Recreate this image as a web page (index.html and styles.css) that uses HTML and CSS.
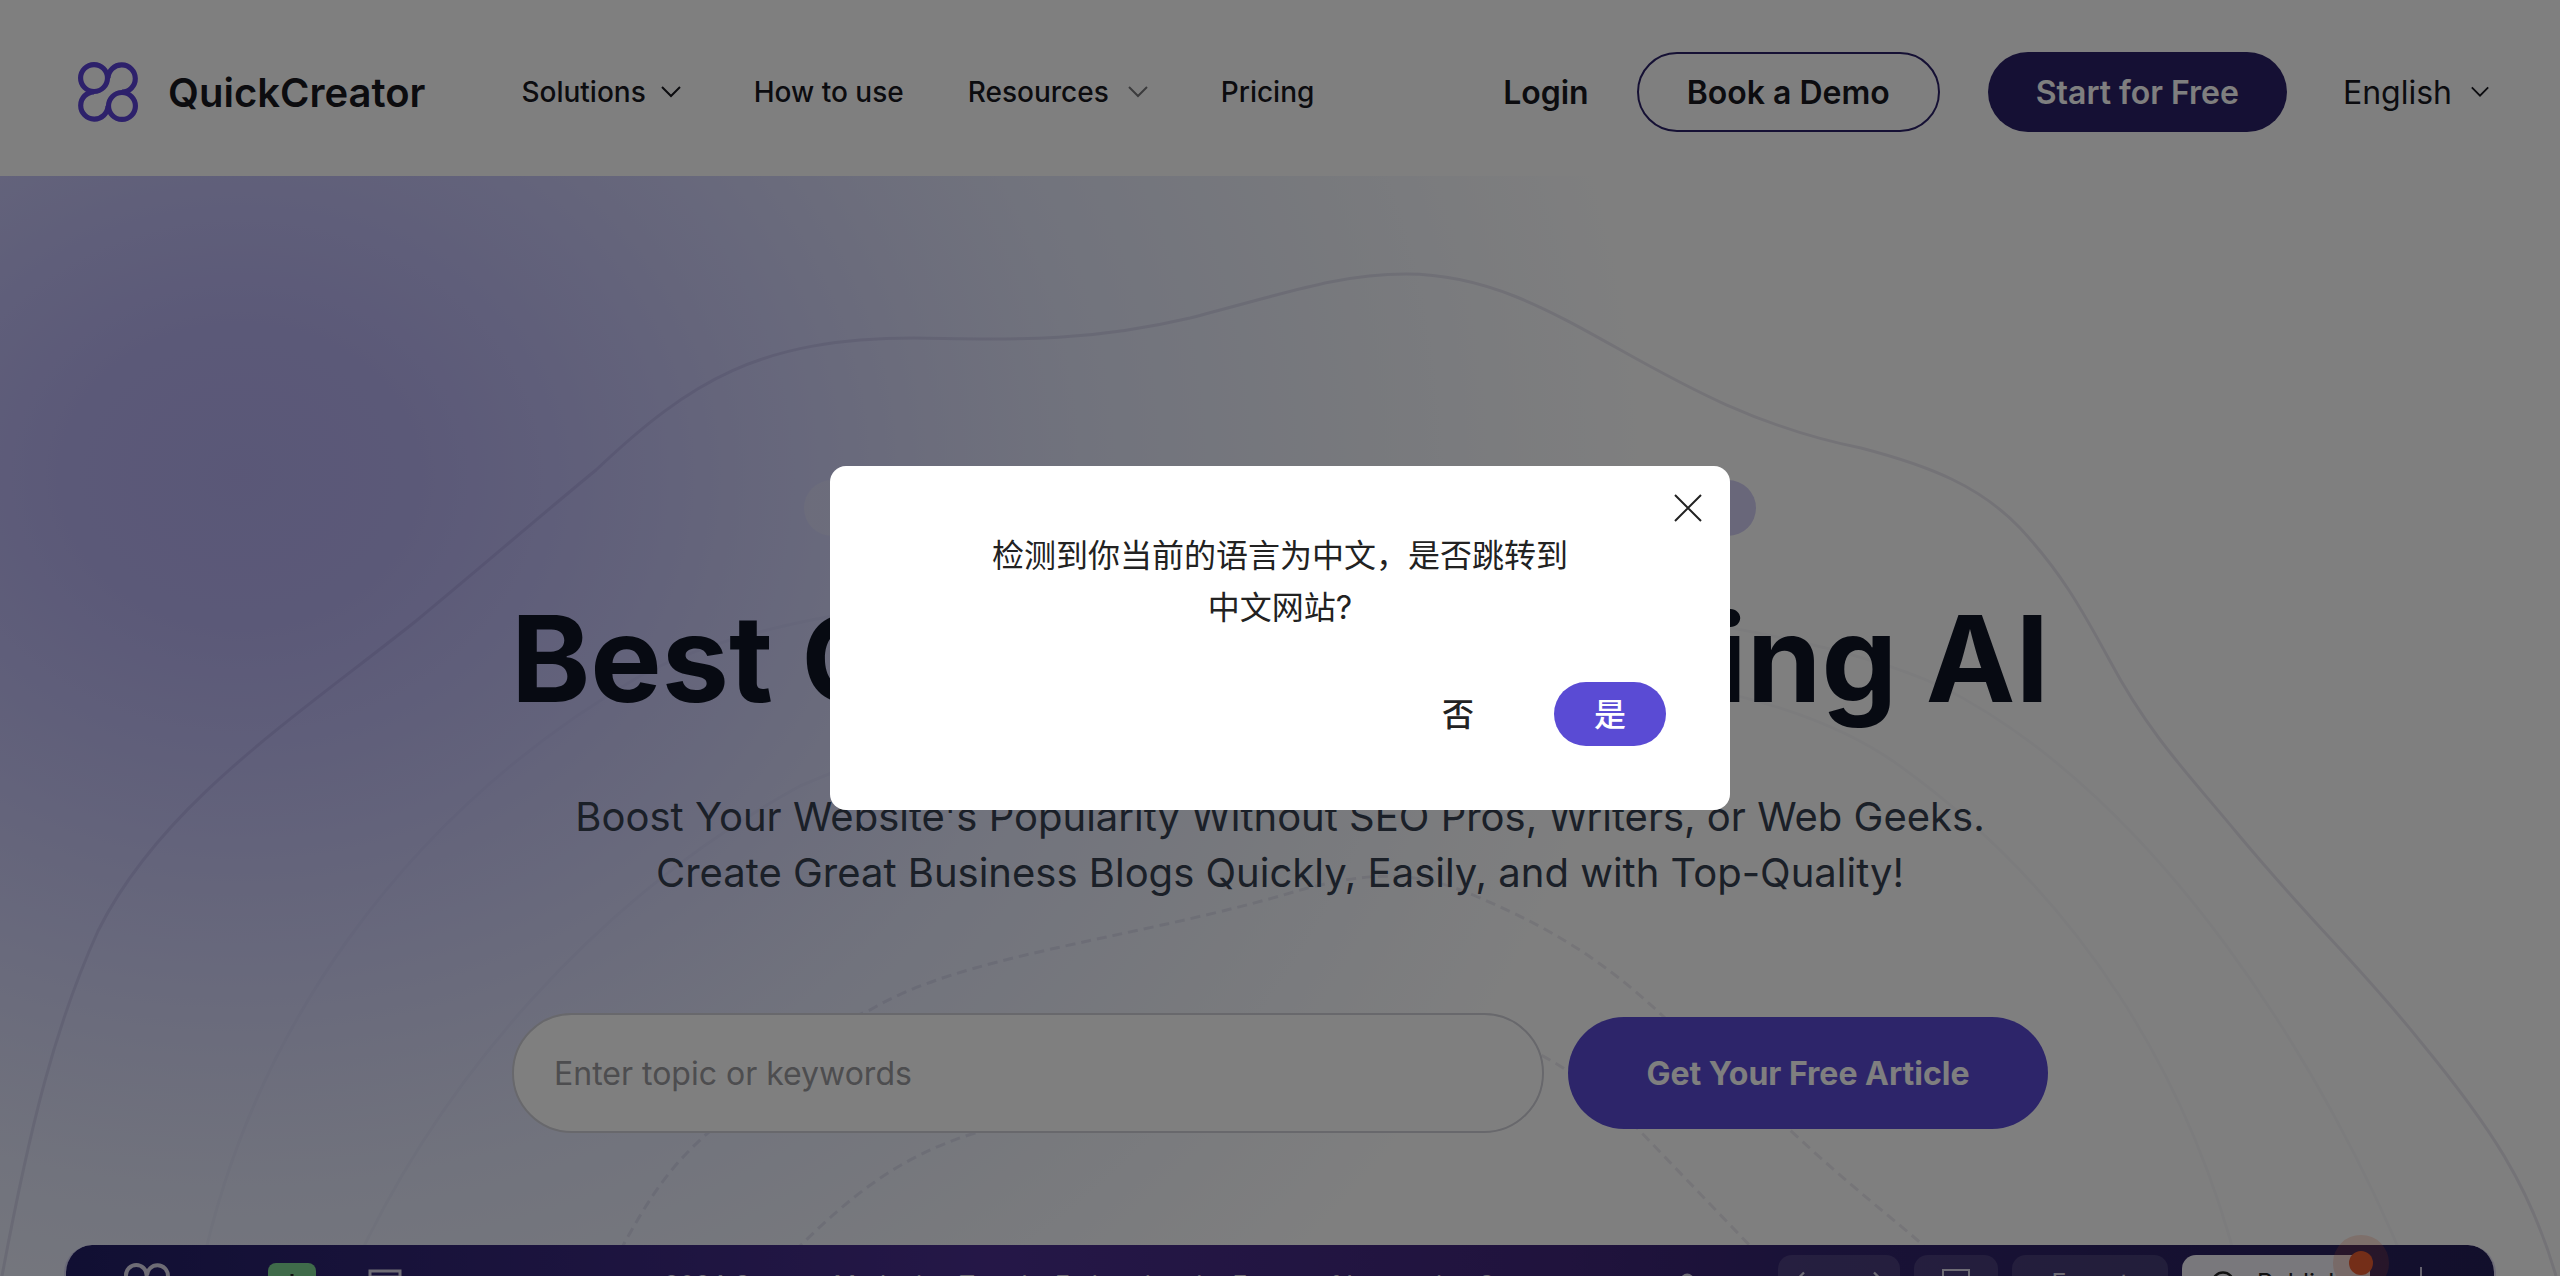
FILE: index.html
```html
<!DOCTYPE html>
<html lang="en">
<head>
    <meta charset="UTF-8">
    <meta name="viewport" content="width=device-width, initial-scale=1.0">
    <title>QuickCreator - Best Content Marketing AI</title>
    <link rel="stylesheet" href="styles.css">
</head>
<body>

    <!-- Header -->
    <header class="header">
        <a href="#" class="brand">
            <svg class="brand-logo" viewBox="0 0 58 58" fill="none" stroke="currentColor" stroke-width="5">
                <circle cx="15.500" cy="15.500" r="13"/>
                <circle cx="42.500" cy="42.500" r="13"/>
                <path d="M29 15.500A13.200 13.200 0 1 1 42.500 29.200M15.500 28.800A13.200 13.200 0 1 0 29 42.500"/>
            </svg>
            <span>QuickCreator</span>
        </a>

        <nav class="nav">
            <a href="#" class="nav-link">Solutions
                <svg class="chevron" viewBox="0 0 22 14"><path d="M2 2l9 9 9-9"/></svg>
            </a>
            <a href="#" class="nav-link">How to use</a>
            <a href="#" class="nav-link nav-link-wide">Resources
                <svg class="chevron chevron-light" viewBox="0 0 22 14"><path d="M2 2l9 9 9-9"/></svg>
            </a>
            <a href="#" class="nav-link">Pricing</a>
        </nav>

        <div class="actions">
            <a href="#" class="login">Login</a>
            <button class="btn btn-outline">Book a Demo</button>
            <button class="btn btn-dark">Start for Free</button>
            <button class="language">English
                <svg class="chevron chevron-small" viewBox="0 0 22 14"><path d="M2 2l9 9 9-9"/></svg>
            </button>
        </div>
    </header>

    <!-- Hero -->
    <main class="hero">
        <svg class="hero-lines" viewBox="0 0 2560 1100" preserveAspectRatio="none" fill="none">
            <path d="M2 1100C30 950 55 850 98 755C160 630 290 545 416 445C480 392 540 340 596 294C690 205 760 162 914 162C1000 163 1080 168 1190 142C1290 116 1340 98 1406 98C1560 98 1650 230 1861 272C1930 290 1980 310 2020 352C2060 395 2080 430 2110 485C2150 560 2190 600 2237 657C2310 745 2360 790 2420 865C2490 950 2530 1010 2556 1100"/>
            <path class="faint" d="M200 1100C250 860 400 640 640 500C900 360 1700 400 1940 510C2160 620 2330 900 2410 1100"/>
            <path class="faint" d="M350 1100C440 900 600 720 800 610C1100 480 1680 430 1900 590C2080 720 2190 900 2240 1100"/>
            <path class="dashed" d="M620 1075C650 1020 670 990 710 955C770 890 810 860 870 834C960 780 1120 765 1280 720C1370 692 1420 695 1480 722C1570 760 1620 800 1664 841C1710 885 1750 915 1790 954C1850 1010 1890 1040 1930 1075"/>
            <path class="dashed" d="M795 1075C850 1020 900 980 975 957C1150 880 1400 830 1541 879C1580 900 1610 925 1639 954L1755 1075"/>
        </svg>

        <div class="badge"></div>
        <h1>Best Content Marketing AI</h1>
        <p class="subtitle">Boost Your Website's Popularity Without SEO Pros, Writers, or Web Geeks.<br>Create Great Business Blogs Quickly, Easily, and with Top-Quality!</p>

        <form class="topic-form">
            <input type="text" class="topic-input" aria-label="Topic" placeholder="Enter topic or keywords">
            <button type="button" class="topic-btn">Get Your Free Article</button>
        </form>

        <!-- Editor preview -->
        <section class="editor">
            <svg class="editor-logo" viewBox="0 0 58 58" fill="none" stroke="currentColor" stroke-width="5">
                <circle cx="15.500" cy="15.500" r="13"/>
                <circle cx="42.500" cy="42.500" r="13"/>
                <path d="M29 15.500A13.200 13.200 0 1 1 42.500 29.200M15.500 28.800A13.200 13.200 0 1 0 29 42.500"/>
            </svg>
            <span class="editor-add">
                <svg viewBox="0 0 28 28" fill="none" stroke="currentColor" stroke-width="3"><path d="M14 1v26M1 14h26"/></svg>
            </span>
            <svg class="editor-layout" viewBox="0 0 34 34" fill="none" stroke="currentColor" stroke-width="3"><path d="M2 2h30v30H2zM2 8h30"/></svg>
            <span class="editor-title">2024 Content Marketing Trends: Embracing the Future of Interactive Content</span>
            <svg class="editor-search" viewBox="0 0 20 20" fill="none" stroke="currentColor" stroke-width="3"><circle cx="8" cy="8" r="6"/><path d="M13 13l6 6"/></svg>
            <div class="editor-tools">
                <span class="tool tool-history">
                    <svg viewBox="0 0 24 24"><path d="M12 3l-9 9 9 9"/></svg>
                    <svg viewBox="0 0 24 24"><path d="M12 3l9 9-9 9"/></svg>
                </span>
                <span class="tool tool-device"><svg viewBox="0 0 28 28"><path d="M1 1h26v19H1zM8 26h12"/></svg></span>
                <span class="tool tool-export">Export</span>
                <span class="tool tool-publish">
                    <svg viewBox="0 0 24 24"><circle cx="12" cy="12" r="9"/></svg>
                    Publish
                    <i class="notice"></i>
                </span>
                <span class="editor-divider"></span>
            </div>
        </section>
    </main>

    <!-- Language popup -->
    <div class="overlay">
        <div class="popup" role="dialog" aria-modal="true" lang="zh-CN">
            <button class="popup-close" aria-label="关闭">
                <svg viewBox="0 0 28 28"><path d="M1 1l26 26M27 1L1 27"/></svg>
            </button>
            <p class="popup-text">检测到你当前的语言为中文，是否跳转到中文网站?</p>
            <div class="popup-actions">
                <button class="popup-btn">否</button>
                <button class="popup-btn popup-btn-primary">是</button>
            </div>
        </div>
    </div>

</body>
</html>
```
FILE: styles.css
```css
/* Basic Reset */
* {
    margin: 0;
    padding: 0;
    box-sizing: border-box;
}

/* The page does not scroll while the popup is open */
body {
    height: 100vh;
    overflow: hidden;
    background: #fff;
    color: #18181f;
    font-family: 'Inter', sans-serif;
}

a {
    color: inherit;
    text-decoration: none;
}

button {
    border: none;
    background: none;
    color: inherit;
    font-family: inherit;
    cursor: pointer;
}

/* Header */
.header {
    display: flex;
    align-items: center;
    height: 176px;
    padding: 8px 70px 0 78px;
}

.brand {
    display: flex;
    align-items: center;
    gap: 30px;
    font-size: 40px;
    font-weight: 600;
}

.brand-logo {
    width: 60px;
    height: 60px;
    color: #5b42d6;
}

.nav {
    display: flex;
    gap: 64px;
    margin-left: 96px;
    font-size: 28px;
    font-weight: 500;
}

.nav-link {
    display: flex;
    align-items: center;
    gap: 14px;
}

.nav-link-wide {
    gap: 18px;
}

.chevron {
    width: 22px;
    height: 14px;
    margin-right: 8px;
    fill: none;
    stroke: currentColor;
    stroke-width: 2;
}

.chevron-light {
    color: #77777a;
}

.chevron-small {
    width: 20px;
    margin-right: 0;
}

.actions {
    display: flex;
    align-items: center;
    gap: 48px;
    margin-left: auto;
    font-size: 32px;
    font-weight: 600;
}

.btn {
    height: 80px;
    padding: 0 48px;
    border-radius: 40px;
    font-size: 32px;
    font-weight: 600;
}

.btn-outline {
    border: 2px solid #2b2168;
}

.btn-dark {
    background: #2b2168;
    color: #fff;
}

.language {
    display: flex;
    align-items: center;
    gap: 18px;
    margin-left: 8px;
    font-size: 32px;
}

/* Hero */
.hero {
    position: relative;
    display: flex;
    flex-direction: column;
    align-items: center;
    padding: 304px 64px 0;
    background:
        radial-gradient(ellipse 1420px 1200px at 240px 300px, rgba(90, 78, 220, 0.45) 0%, rgba(90, 80, 222, 0.44) 12%, rgba(90, 86, 228, 0.38) 24%, rgba(92, 98, 232, 0.28) 42%, rgba(90, 112, 225, 0.17) 60%, rgba(95, 125, 210, 0.09) 80%, rgba(110, 145, 190, 0) 100%);
}

.hero-lines {
    position: absolute;
    inset: 0;
    width: 100%;
    height: 1100px;
    stroke: rgba(70, 60, 120, 0.12);
    stroke-width: 3;
}

.hero-lines .faint {
    stroke: rgba(70, 60, 120, 0.03);
}

.hero-lines .dashed {
    stroke: rgba(70, 60, 120, 0.1);
    stroke-dasharray: 10 6;
}

.badge {
    width: 952px;
    height: 56px;
    border-radius: 28px;
    background: linear-gradient(90deg, rgba(235, 235, 245, 0.3), #d2cef4);
}

h1 {
    position: relative;
    margin-top: 48px;
    color: #0e1424;
    font-size: 120px;
    line-height: 150px;
    font-weight: 700;
}

.subtitle {
    position: relative;
    margin-top: 55px;
    color: #374151;
    font-size: 40px;
    line-height: 56px;
    text-align: center;
}

.topic-form {
    position: relative;
    display: flex;
    align-items: center;
    gap: 24px;
    width: 100%;
    max-width: 1536px;
    margin-top: 112px;
}

.topic-input {
    flex: 1;
    height: 120px;
    padding: 0 40px;
    border: 2px solid #d0d0d8;
    border-radius: 60px;
    background: #fff;
    font-family: inherit;
    font-size: 32px;
}

.topic-input::placeholder {
    color: #9a9a9e;
}

.topic-btn {
    width: 480px;
    height: 112px;
    border-radius: 56px;
    background: #5a4bd4;
    color: #fff;
    font-size: 32px;
    font-weight: 700;
}

/* Editor preview */
.editor {
    position: relative;
    display: flex;
    align-items: flex-start;
    width: 100%;
    height: 400px;
    margin-top: 112px;
    padding: 10px 72px 0 58px;
    border-radius: 28px 28px 0 0;
    background: linear-gradient(90deg, #221f66, #4a2f8f 38%, #40267a 62%, #33246e 72%, #251f58);
    background-clip: padding-box;
    border: solid rgba(160, 150, 220, 0.3);
    border-width: 0 2px;
    color: #dcd8ea;
    font-size: 25px;
}

.editor-logo {
    width: 46px;
    height: 46px;
    margin-top: 8px;
}

.editor-add {
    display: flex;
    align-items: center;
    justify-content: center;
    width: 48px;
    height: 48px;
    margin: 8px 52px 0 98px;
    border-radius: 8px;
    background: #7fd694;
    color: #222;
}

.editor-add svg {
    width: 28px;
}

.editor-layout {
    width: 34px;
    height: 34px;
    margin-top: 14px;
}

.editor-title {
    margin: 14px 0 0 262px;
    line-height: 32px;
    white-space: nowrap;
}

.editor-search {
    width: 18px;
    margin: 18px 0 0 auto;
}

.editor-tools {
    display: flex;
    gap: 14px;
    margin-left: 80px;
}

.tool {
    position: relative;
    display: flex;
    align-items: center;
    justify-content: center;
    gap: 20px;
    height: 56px;
    border-radius: 14px;
    background: rgba(255, 255, 255, 0.12);
}

.tool svg {
    width: 28px;
    height: 28px;
    fill: none;
    stroke: currentColor;
    stroke-width: 2;
}

.tool-history {
    justify-content: space-between;
    width: 122px;
    padding: 0 12px;
}

.tool-device {
    width: 84px;
}

.tool-export {
    width: 156px;
}

.tool-publish {
    width: 188px;
    background: #f2f0f8;
    color: #222;
}

.notice {
    position: absolute;
    top: -4px;
    right: -3px;
    width: 24px;
    height: 24px;
    border-radius: 50%;
    background: #e85c30;
    box-shadow: 0 0 0 16px rgba(240, 100, 55, 0.2);
}

.editor-divider {
    width: 2px;
    height: 40px;
    margin: 12px 0 0 36px;
    background: #c8c4dc;
}

/* Language popup */
.overlay {
    position: fixed;
    inset: 0;
    z-index: 100;
    display: flex;
    align-items: center;
    justify-content: center;
    background: rgba(0, 0, 0, 0.5);
}

.popup {
    position: relative;
    width: 900px;
    padding: 64px;
    border-radius: 16px;
    background: #fff;
    color: #222;
    font-family: 'Inter', 'Noto Sans CJK SC', sans-serif;
}

.popup-close {
    position: absolute;
    top: 28px;
    right: 28px;
    width: 28px;
    height: 28px;
}

.popup-close svg {
    display: block;
    fill: none;
    stroke: #222;
    stroke-width: 2;
}

.popup-text {
    max-width: 600px;
    margin: 0 auto;
    font-size: 32px;
    line-height: 52px;
    text-align: center;
}

.popup-actions {
    display: flex;
    justify-content: flex-end;
    gap: 40px;
    margin-top: 48px;
}

.popup-btn {
    width: 112px;
    height: 64px;
    padding-bottom: 4px;
    border-radius: 32px;
    font-size: 32px;
    font-weight: 500;
}

.popup-btn-primary {
    background: #5a4bd4;
    color: #fff;
}
```
